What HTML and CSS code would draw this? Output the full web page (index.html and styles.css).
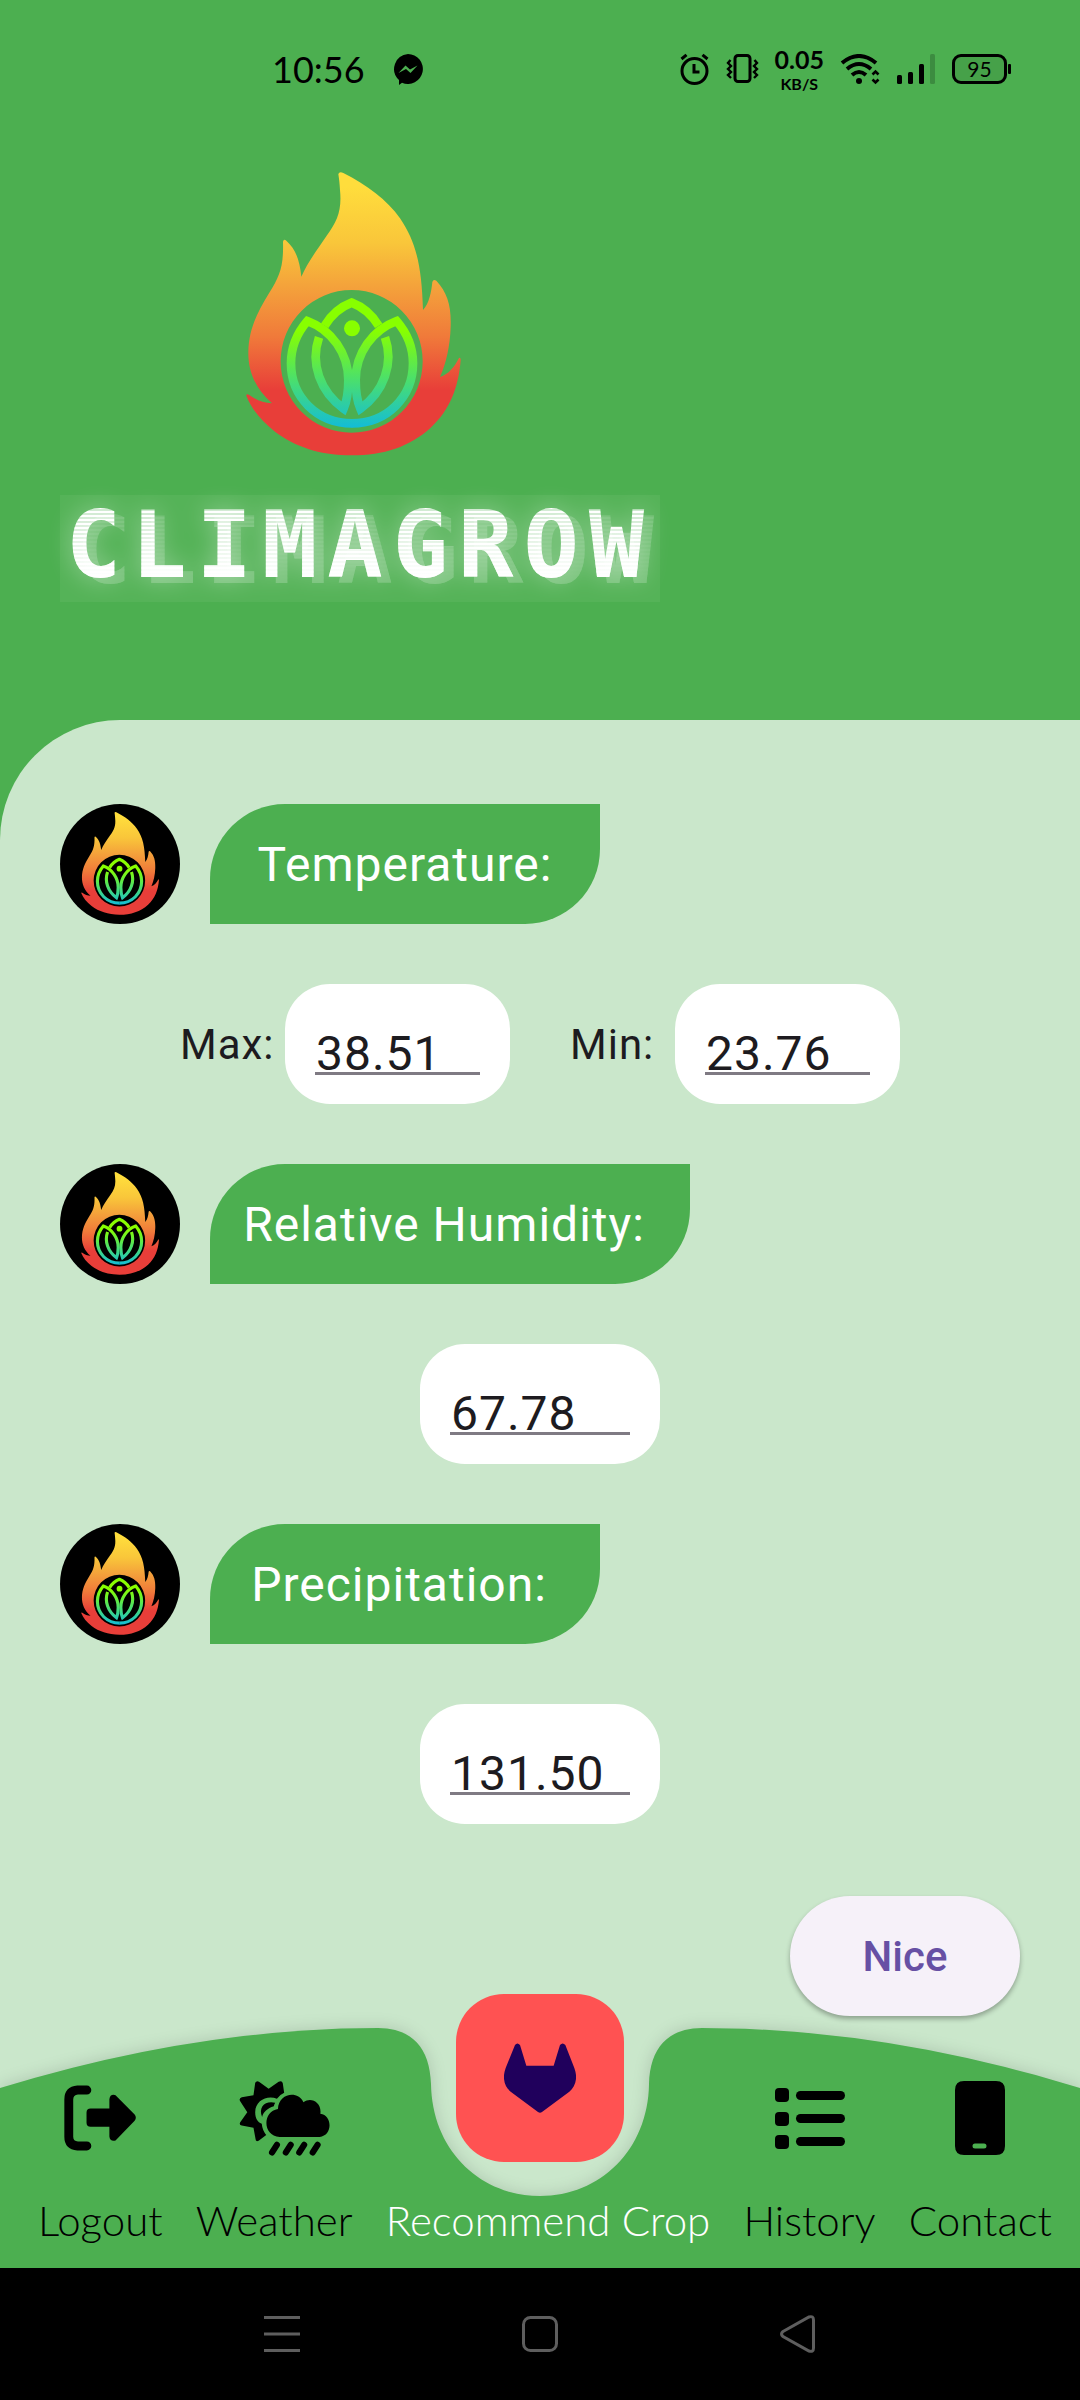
FILE: index.html
```html
<!DOCTYPE html>
<html lang="en">
<head>
<meta charset="utf-8">
<meta name="viewport" content="width=device-width, initial-scale=1">
<title>ClimaGrow</title>
<link rel="stylesheet" href="styles.css">
</head>
<body>
<svg class="defs" aria-hidden="true">
  <defs>
    <linearGradient id="fire" gradientUnits="userSpaceOnUse" x1="0" y1="66" x2="0" y2="916">
      <stop offset="0.05" stop-color="#ffdd3c"/>
      <stop offset="0.25" stop-color="#f9c63a"/>
      <stop offset="0.4" stop-color="#f4a33b"/>
      <stop offset="0.58" stop-color="#f07a3a"/>
      <stop offset="0.77" stop-color="#e83e39"/>
      <stop offset="1" stop-color="#e83e39"/>
    </linearGradient>
    <linearGradient id="leaf" gradientUnits="userSpaceOnUse" x1="0" y1="444" x2="0" y2="834">
      <stop offset="0.25" stop-color="#88ff00"/>
      <stop offset="0.6" stop-color="#4fe264"/>
      <stop offset="1" stop-color="#12bcd8"/>
    </linearGradient>
    <g id="flame">
      <path fill="url(#fire)" fill-rule="evenodd" d="M355 72Q358 64 370 69C440 104 502 150 540 205C590 278 605 352 609 480C628 460 634 425 637 396Q640 386 649 392C682 428 694 466 692 530C690 590 678 640 660 681C686 672 703 652 717 624Q722 622 722 630C716 710 690 780 632 833C570 890 490 916 396 916C300 916 225 890 165 845C125 813 95 778 79 737Q79 730 88 735C110 751 130 759 156 760C106 716 84 664 85 606C86 540 110 490 147 430C180 377 191 350 189 275Q191 266 199 272C228 298 239 332 244 380C262 340 287 305 320 257C352 214 366 180 360 120C359 100 357 85 355 72ZM395 420A213 214 0 1 0 395 848A213 214 0 1 0 395 420Z"/>
      <g fill="none" stroke="url(#leaf)" stroke-width="26">
        <path d="M314 527Q345 477 395 458Q445 477 476 527"/>
        <path d="M397 820C290 820 213 740 213 640C213 590 232 548 262 513C335 540 385 610 385 690C385 730 380 755 371 776C300 725 270 640 297 562"/>
        <path d="M395 820C502 820 579 740 579 640C579 590 560 548 530 513C457 540 407 610 407 690C407 730 412 755 421 776C492 725 522 640 495 562"/>
      </g>
      <circle cx="396" cy="535" r="24" fill="#88ff00"/>
    </g>
  </defs>
</svg>

<div class="app">
  <header class="header">
    <div class="status">
      <div class="status-group">
        <span class="clock">10:56</span>
        <svg width="30" height="31" viewBox="0 0 30 31" aria-hidden="true"><path d="M15 0a15 15 0 1 1-6 28.800L6 31V26A15 15 0 0 1 15 0Z"/><path d="M5.500 19l7-7.500 4.500 4 7.500-4-7 7.500-4.500-4Z" fill="#4caf50"/></svg>
      </div>
      <div class="status-group status-right">
        <svg width="30" height="32" viewBox="0 0 30 32" fill="none" stroke="#000" stroke-width="3" aria-hidden="true"><circle cx="14.500" cy="18" r="12.500"/><path d="M1.500 6L6.500 1.800M27.500 6L22.500 1.800M14 11v8h5.500"/></svg>
        <svg width="33" height="30" viewBox="0 0 33 30" fill="none" stroke="#000" stroke-width="2.400" aria-hidden="true"><rect x="9" y="1.500" width="15" height="26" rx="3" stroke-width="3"/><path d="M4.500 6L2 9l3 3-3 3 3 3-3 3 3 3M28.500 6L31 9l-3 3 3 3-3 3 3 3-3 3"/></svg>
        <span class="speed"><span class="speed-value">0.05</span><span class="speed-unit">KB/S</span></span>
        <svg width="41" height="31" viewBox="0 0 41 31" fill="none" stroke="#000" stroke-width="4" aria-hidden="true"><path d="M2 9Q19 -5 36 9M7 15Q19 5 31 15M12 21Q19 15 26 21"/><circle cx="19" cy="27" r="3" fill="#000" stroke="none"/><path d="M32.500 20.500l3-3 3 3M32.500 25.500l3 3 3-3" stroke-width="2.600"/></svg>
        <svg width="39" height="31" viewBox="0 0 39 31" aria-hidden="true"><rect y="21" width="5" height="9" rx="1.500"/><rect x="11" y="18" width="5" height="12" rx="1.500"/><rect x="22" y="10" width="5" height="20" rx="1.500"/><rect x="33" width="5" height="30" rx="1.500" opacity=".2"/></svg>
        <span class="battery">95</span>
      </div>
    </div>
    <div class="brand">
      <svg class="brand-flame" viewBox="15 0 810 960" role="img" aria-label="Flame"><use href="#flame"/></svg>
      <h1 class="wordmark"><span>CLIMAGROW</span></h1>
    </div>
  </header>

  <div class="sheet">
    <main class="content">
      <div class="message">
        <span class="avatar"><svg viewBox="-5 0 810 960" aria-hidden="true"><use href="#flame"/></svg></span>
        <h2 class="bubble">Temperature:</h2>
      </div>
      <div class="inputs">
        <label class="label" for="max">Max:</label>
        <div class="field"><input id="max" type="text" inputmode="decimal" value="38.51"></div>
        <label class="label label-next" for="min">Min:</label>
        <div class="field"><input id="min" type="text" inputmode="decimal" value="23.76"></div>
      </div>
      <div class="message">
        <span class="avatar"><svg viewBox="-5 0 810 960" aria-hidden="true"><use href="#flame"/></svg></span>
        <h2 class="bubble bubble-wide bubble-trail" id="humidity-label">Relative Humidity:</h2>
      </div>
      <div class="inputs">
        <div class="field field-wide"><input type="text" inputmode="decimal" value="67.78" aria-labelledby="humidity-label"></div>
      </div>
      <div class="message">
        <span class="avatar"><svg viewBox="-5 0 810 960" aria-hidden="true"><use href="#flame"/></svg></span>
        <h2 class="bubble bubble-trail" id="precipitation-label">Precipitation:</h2>
      </div>
      <div class="inputs">
        <div class="field field-wide"><input type="text" inputmode="decimal" value="131.50" aria-labelledby="precipitation-label"></div>
      </div>
      <button class="submit" type="button">Nice</button>
    </main>

    <nav class="tabs">
      <div class="tabs-shape" aria-hidden="true">
        <svg class="shape-side" viewBox="0 0 378 240" preserveAspectRatio="none"><path d="M0 60Q195 0 378 0V240H0Z"/></svg>
        <svg class="shape-notch" viewBox="378 0 324 240"><path d="M378 0C412 0 430 20 431 56C432 122 480 168 540 168C600 168 648 122 649 56C650 20 668 0 702 0V240H378Z"/></svg>
        <svg class="shape-side" viewBox="0 0 378 240" preserveAspectRatio="none"><path d="M0 0Q183 0 378 60V240H0Z"/></svg>
      </div>
      <button class="fab" type="button" aria-label="Recommend Crop">
        <svg width="72" height="70" viewBox="852 38 216 210" aria-hidden="true"><path fill="#20005c" d="M885 44Q892 35 900 44L919 106H1001L1020 44Q1028 35 1036 44L1063 113C1075 145 1065 170 1048 184L966 245Q960 250 954 245L872 184C855 170 845 145 857 113Z"/></svg>
      </button>
      <a class="tab" href="#logout">
        <svg width="72" height="78" viewBox="184 361 211 228" aria-hidden="true"><path fill="none" stroke="#000" stroke-width="26" stroke-linecap="round" stroke-linejoin="round" d="M251 393H224Q198 395 198 421V530Q198 555 224 557H251"/><path d="M262 447H317V420Q319 404 335 408L391 465Q398 474 391 483L335 541Q319 545 317 529V501H262Q250 501 250 489V459Q250 447 262 447Z"/></svg>
        <span>Logout</span>
      </a>
      <a class="tab" href="#weather">
        <svg width="113" height="78" viewBox="637 360 328 226" aria-hidden="true"><path d="M745 371Q749 364 756 368L784 388L813 368Q823 364 825 372L829 400Q816 406 808 417C780 406 745 422 745 456C745 474 752 484 764 490Q766 510 777 522L755 539Q746 543 746 534L740 501L706 495Q698 493 701 486L722 456L701 424Q697 416 706 413L740 407Z"/><path d="M765 470C753 440 775 422 803 429Q800 434 799 439C781 445 768 456 765 470Z"/><path d="M816 528C765 526 766 453 811 447C812 403 867 391 885 427C908 410 939 429 934 461C970 465 970 525 932 528Z"/><path fill="none" stroke="#000" stroke-width="18" stroke-linecap="round" d="M808 551L794 573M848 551L834 573M887 551L873 573M926 551L912 573"/></svg>
        <span>Weather</span>
      </a>
      <a class="tab tab-active" href="#recommend"><span>Recommend Crop</span></a>
      <a class="tab" href="#history">
        <svg width="72" height="78" viewBox="0 0 72 78" aria-hidden="true"><rect x="1" y="9" width="14" height="14" rx="4"/><rect x="1" y="33" width="14" height="14" rx="4"/><rect x="1" y="56" width="14" height="14" rx="4"/><rect x="22" y="12" width="49" height="9" rx="4.500"/><rect x="22" y="35" width="49" height="9" rx="4.500"/><rect x="22" y="58" width="49" height="9" rx="4.500"/></svg>
        <span>History</span>
      </a>
      <a class="tab" href="#contact">
        <svg width="50" height="78" viewBox="0 0 50 78" aria-hidden="true"><path fill-rule="evenodd" d="M9 2H41Q50 2 50 11V67Q50 76 41 76H9Q0 76 0 67V11Q0 2 9 2ZM20 64.500a2.500 2.500 0 0 0 0 5H29a2.500 2.500 0 0 0 0-5Z"/></svg>
        <span>Contact</span>
      </a>
    </nav>
  </div>

  <div class="system">
    <button type="button" aria-label="Recent apps"><svg width="36" height="38" viewBox="0 0 36 38"><path d="M0 2.500H36M0 19H36M0 35.500H36"/></svg></button>
    <button type="button" aria-label="Home"><svg width="36" height="38" viewBox="0 0 36 38"><rect x="1.500" y="2.500" width="33" height="33" rx="7"/></svg></button>
    <button type="button" aria-label="Back"><svg width="36" height="38" viewBox="0 0 36 38"><path d="M3 16.500L29 2Q33.500 0.500 33.500 5V33Q33.500 37.500 29 36L3 21.500Q0 19 3 16.500Z"/></svg></button>
  </div>
</div>
</body>
</html>
```
FILE: styles.css
```css
* {
  box-sizing: border-box;
}

body {
  margin: 0;
  font-family: Roboto, "Liberation Sans", sans-serif;
  color: #1d1b20;
}

button {
  border: 0;
  padding: 0;
  font: inherit;
}

svg {
  display: block;
}

.defs {
  position: absolute;
  width: 0;
  height: 0;
}

.app {
  display: flex;
  flex-direction: column;
  min-height: 100vh;
  background: #4caf50;
}

/* Header */

.header {
  padding-bottom: 118px;
}

.status {
  display: flex;
  justify-content: space-between;
  align-items: center;
  height: 138px;
  padding: 0 73px 0 272px;
  color: #000;
  font-family: Lato, sans-serif;
}

.status-group {
  display: flex;
  align-items: center;
  gap: 28px;
}

.status-right {
  gap: 16px;
}

.clock {
  font-size: 36px;
}

.speed {
  display: flex;
  flex-direction: column;
  align-items: center;
  font-weight: 700;
}

.speed-value {
  font-size: 25px;
  line-height: 30px;
}

.speed-unit {
  font-size: 16px;
  line-height: 20px;
}

.battery {
  position: relative;
  width: 55px;
  border: 3px solid #000;
  border-radius: 9px;
  background: rgba(0, 0, 0, 0.08);
  font-size: 21px;
  line-height: 24px;
  text-align: center;
}

.battery::after {
  content: "";
  position: absolute;
  top: 7px;
  right: -7px;
  width: 3px;
  height: 10px;
  border-radius: 1px;
  background: #000;
}

.brand {
  display: flex;
  flex-direction: column;
  align-items: center;
  gap: 25px;
  width: 600px;
  margin: 12px 0 0 60px;
}

.brand-flame {
  width: 270px;
  height: 320px;
}

.wordmark {
  width: 100%;
  margin: 0;
  padding-bottom: 5px;
  background: rgba(255, 255, 255, 0.05);
  font-family: "DejaVu Sans Mono", monospace;
  font-size: 92px;
  font-weight: 700;
  letter-spacing: 10px;
  line-height: 102px;
  text-align: center;
}

.wordmark span {
  display: block;
  color: transparent;
  background:
    linear-gradient(rgba(255, 255, 255, 0) 20px, #fff 80px),
    repeating-linear-gradient(#fff 0 2px, rgba(255, 255, 255, 0.7) 2px 4px);
  -webkit-background-clip: text;
  background-clip: text;
  filter: drop-shadow(10px 6px 0 rgba(255, 255, 255, 0.2)) drop-shadow(0 0 12px rgba(255, 255, 255, 0.4));
}

/* Form */

.sheet {
  display: flex;
  flex: 1;
  flex-direction: column;
  border-top-left-radius: 120px;
  background: #cae7cb;
}

.content {
  display: flex;
  flex-direction: column;
  gap: 60px;
  padding: 84px 60px 12px;
}

.message {
  display: flex;
  gap: 30px;
}

.avatar {
  width: 120px;
  height: 120px;
  border-radius: 50%;
  background: #000;
}

.avatar svg {
  width: 98px;
  height: 116px;
  margin: 0 auto;
}

.bubble {
  width: 390px;
  height: 120px;
  margin: 0;
  border-radius: 75px 0;
  background: #4caf50;
  color: #fff;
  font-size: 48px;
  font-weight: 400;
  letter-spacing: 1px;
  line-height: 122px;
  text-align: center;
}

.bubble-wide {
  width: 480px;
}

.bubble-trail {
  padding-right: 12px;
}

.inputs {
  display: flex;
  align-items: center;
  justify-content: center;
}

.label {
  width: 105px;
  font-size: 42px;
  letter-spacing: 1px;
}

.label-next {
  margin-left: 60px;
}

.field {
  display: flex;
  align-items: flex-end;
  width: 225px;
  height: 120px;
  padding: 0 30px 23px;
  border-radius: 45px;
  background: #fff;
}

.field-wide {
  width: 240px;
}

.field input {
  width: 100%;
  height: 56px;
  padding: 0 0 0 1px;
  border: 0;
  outline: 0;
  background: linear-gradient(#7f7a83, #7f7a83) 0 47px / 100% 3px no-repeat;
  color: #1d1b20;
  font-family: inherit;
  font-size: 48px;
  letter-spacing: 1px;
}

.submit {
  align-self: flex-end;
  width: 230px;
  height: 120px;
  margin-top: 12px;
  border-radius: 60px;
  background: #f6f1f9;
  box-shadow: 0 3px 5px rgba(0, 0, 0, 0.3);
  color: #6750a4;
  font-size: 42px;
  font-weight: 500;
}

/* Bottom tabs */

.tabs {
  position: relative;
  display: flex;
  align-items: flex-end;
  justify-content: space-between;
  height: 240px;
  margin-top: auto;
  padding: 0 28px 24px 38px;
}

.tabs-shape {
  position: absolute;
  inset: 0;
  display: flex;
  fill: #4caf50;
  filter: drop-shadow(0 0 8px rgba(0, 0, 0, 0.15));
  clip-path: inset(-30px 0 0);
}

.shape-side {
  flex: 1;
  min-width: 0;
  height: 100%;
}

.shape-notch {
  flex: none;
  width: 324px;
  height: 100%;
}

.fab {
  position: absolute;
  top: -34px;
  left: calc(50% - 84px);
  display: flex;
  align-items: center;
  justify-content: center;
  width: 168px;
  height: 168px;
  border-radius: 48px;
  background: #ff5252;
}

.tab {
  position: relative;
  display: flex;
  flex-direction: column;
  align-items: center;
  gap: 39px;
  color: #000;
  font-family: Lato, sans-serif;
  font-size: 42px;
  font-weight: 300;
  line-height: 48px;
  text-decoration: none;
  white-space: nowrap;
}

.tab-active {
  color: #fff;
}

/* System navigation */

.system {
  display: flex;
  align-items: center;
  justify-content: center;
  gap: 222px;
  height: 132px;
  background: #000;
}

.system button {
  background: none;
}

.system svg {
  fill: none;
  stroke: #5e5e5e;
  stroke-width: 3;
}
```
